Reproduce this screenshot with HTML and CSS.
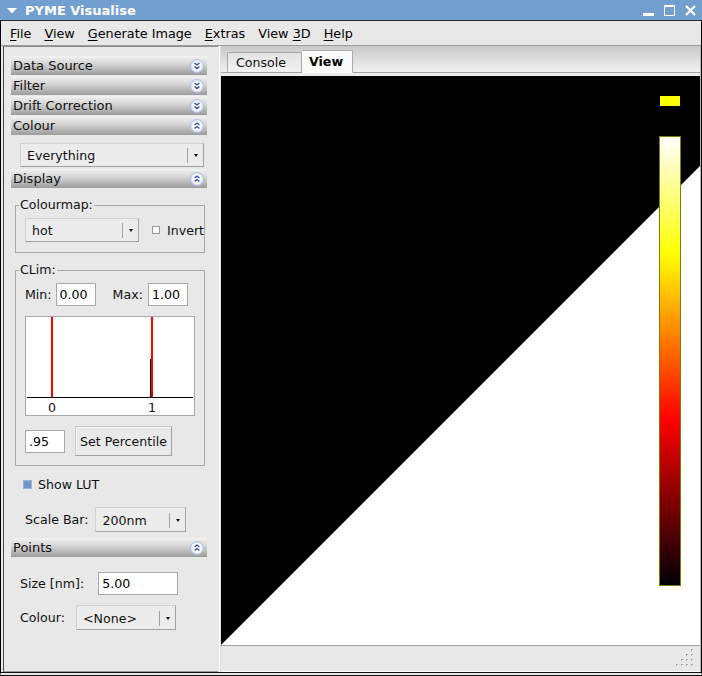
FILE: index.html
```html
<!DOCTYPE html>
<html>
<head>
<meta charset="utf-8">
<title>PYME Visualise</title>
<link rel="stylesheet" href="styles.css">
</head>
<body>
<div class="window">
  <div class="titlebar">
    <svg class="tb-menu" width="10" height="6" viewBox="0 0 10 6"><polygon points="0,0 10,0 5,5.5" fill="#fff"/></svg>
    <span class="title">PYME Visualise</span>
    <div class="tb-btns">
      <svg width="12" height="12" viewBox="0 0 12 12"><rect x="0" y="8" width="11" height="3" fill="#fff"/></svg>
      <svg width="12" height="12" viewBox="0 0 12 12"><path d="M0 0H11V11H0Z M1 2V10H10V2Z" fill="#fff" fill-rule="evenodd"/></svg>
      <svg width="12" height="12" viewBox="0 0 12 12"><path d="M1 1L10 10M10 1L1 10" stroke="#fff" stroke-width="2.2" fill="none"/></svg>
    </div>
  </div>
  <div class="frame">
    <div class="menubar">
      <span class="mi"><u>F</u>ile</span>
      <span class="mi"><u>V</u>iew</span>
      <span class="mi"><u>G</u>enerate Image</span>
      <span class="mi"><u>E</u>xtras</span>
      <span class="mi">View <u>3</u>D</span>
      <span class="mi"><u>H</u>elp</span>
    </div>
    <div class="main">
      <div class="sidebar">
        <div class="fold"><span>Data Source</span>
          <svg class="ficon" width="14" height="14" viewBox="0 0 14 14"><circle cx="7" cy="7" r="6.5" fill="#dde5f6" stroke="#b3c1df"/><circle cx="7" cy="7" r="4.8" fill="#fbfcff"/><path d="M4.6 4 L7 6 L9.4 4 M4.6 7.6 L7 9.6 L9.4 7.6" fill="none" stroke="#2b45b2" stroke-width="1.3"/></svg></div>
        <div class="fold"><span>Filter</span>
          <svg class="ficon" width="14" height="14" viewBox="0 0 14 14"><circle cx="7" cy="7" r="6.5" fill="#dde5f6" stroke="#b3c1df"/><circle cx="7" cy="7" r="4.8" fill="#fbfcff"/><path d="M4.6 4 L7 6 L9.4 4 M4.6 7.6 L7 9.6 L9.4 7.6" fill="none" stroke="#2b45b2" stroke-width="1.3"/></svg></div>
        <div class="fold"><span>Drift Correction</span>
          <svg class="ficon" width="14" height="14" viewBox="0 0 14 14"><circle cx="7" cy="7" r="6.5" fill="#dde5f6" stroke="#b3c1df"/><circle cx="7" cy="7" r="4.8" fill="#fbfcff"/><path d="M4.6 4 L7 6 L9.4 4 M4.6 7.6 L7 9.6 L9.4 7.6" fill="none" stroke="#2b45b2" stroke-width="1.3"/></svg></div>
        <div class="fold"><span>Colour</span>
          <svg class="ficon" width="14" height="14" viewBox="0 0 14 14"><circle cx="7" cy="7" r="6.5" fill="#dde5f6" stroke="#b3c1df"/><circle cx="7" cy="7" r="4.8" fill="#fbfcff"/><path d="M4.6 6 L7 4 L9.4 6 M4.6 9.6 L7 7.6 L9.4 9.6" fill="none" stroke="#2b45b2" stroke-width="1.3"/></svg></div>

        <div class="combo combo-everything"><span class="cval">Everything</span><span class="csep"></span><span class="carr"></span></div>

        <div class="fold fold-display"><span>Display</span>
          <svg class="ficon" width="14" height="14" viewBox="0 0 14 14"><circle cx="7" cy="7" r="6.5" fill="#dde5f6" stroke="#b3c1df"/><circle cx="7" cy="7" r="4.8" fill="#fbfcff"/><path d="M4.6 6 L7 4 L9.4 6 M4.6 9.6 L7 7.6 L9.4 9.6" fill="none" stroke="#2b45b2" stroke-width="1.3"/></svg></div>

        <fieldset class="sbox sbox-cmap">
          <legend>Colourmap:</legend>
          <div class="row">
            <div class="combo combo-hot"><span class="cval">hot</span><span class="csep"></span><span class="carr"></span></div>
            <span class="chk"></span>
            <span class="chk-label">Invert</span>
          </div>
        </fieldset>

        <fieldset class="sbox sbox-clim">
          <legend>CLim:</legend>
          <div class="row">
            <span class="lbl lbl-min">Min:</span>
            <span class="input in-small">0.00</span>
            <span class="lbl lbl-max">Max:</span>
            <span class="input in-small">1.00</span>
          </div>
          <div class="hist">
            <svg width="168" height="98" viewBox="0 0 168 98">
              <rect x="25" y="0" width="2" height="80" fill="#ff0000"/>
              <rect x="125" y="0" width="2" height="80" fill="#ff0000"/>
              <rect x="124" y="42" width="1" height="38" fill="#000"/>
              <rect x="1" y="80" width="166" height="1" fill="#000"/>
              <text x="26" y="95" text-anchor="middle" class="htxt">0</text>
              <text x="126" y="95" text-anchor="middle" class="htxt">1</text>
            </svg>
          </div>
          <div class="row row-pct">
            <span class="input in-small">.95</span>
            <span class="button">Set Percentile</span>
          </div>
        </fieldset>

        <div class="row row-lut">
          <span class="chk chk-on"></span>
          <span class="lut-label">Show LUT</span>
        </div>

        <div class="row row-scale">
          <span class="lbl">Scale Bar:</span>
          <div class="combo combo-scale"><span class="cval">200nm</span><span class="csep"></span><span class="carr"></span></div>
        </div>

        <div class="fold fold-points"><span>Points</span>
          <svg class="ficon" width="14" height="14" viewBox="0 0 14 14"><circle cx="7" cy="7" r="6.5" fill="#dde5f6" stroke="#b3c1df"/><circle cx="7" cy="7" r="4.8" fill="#fbfcff"/><path d="M4.6 6 L7 4 L9.4 6 M4.6 9.6 L7 7.6 L9.4 9.6" fill="none" stroke="#2b45b2" stroke-width="1.3"/></svg></div>

        <div class="row row-size">
          <span class="lbl lbl-size">Size [nm]:</span>
          <span class="input in-size">5.00</span>
        </div>
        <div class="row row-pcol">
          <span class="lbl lbl-pcol">Colour:</span>
          <div class="combo combo-none"><span class="cval">&lt;None&gt;</span><span class="csep"></span><span class="carr"></span></div>
        </div>
      </div>
      <div class="splitter"></div>
      <div class="notebook">
        <div class="tabs">
          <span class="tab">Console</span>
          <span class="tab tab-active">View</span>
        </div>
        <div class="page">
          <div class="canvas">
            <svg class="image" width="479" height="569" viewBox="0 0 479 569">
              <rect x="0" y="0" width="479" height="569" fill="#fff"/>
              <polygon points="0,0 479,0 479,90 0,569" fill="#000"/>
            </svg>
            <div class="lut-marker"></div>
            <div class="lut-bar"></div>
          </div>
        </div>
        <div class="status">
          <svg class="grip" width="20" height="20" viewBox="0 0 20 20">
            <g fill="#a9a9a9">
              <rect x="15" y="1" width="2" height="2"/>
              <rect x="10" y="6" width="2" height="2"/><rect x="15" y="6" width="2" height="2"/>
              <rect x="5" y="11" width="2" height="2"/><rect x="10" y="11" width="2" height="2"/><rect x="15" y="11" width="2" height="2"/>
              <rect x="0" y="16" width="2" height="2"/><rect x="5" y="16" width="2" height="2"/><rect x="10" y="16" width="2" height="2"/><rect x="15" y="16" width="2" height="2"/>
            </g>
            <g fill="#ffffff">
              <rect x="16" y="2" width="1" height="1"/>
              <rect x="11" y="7" width="1" height="1"/><rect x="16" y="7" width="1" height="1"/>
              <rect x="6" y="12" width="1" height="1"/><rect x="11" y="12" width="1" height="1"/><rect x="16" y="12" width="1" height="1"/>
              <rect x="1" y="17" width="1" height="1"/><rect x="6" y="17" width="1" height="1"/><rect x="11" y="17" width="1" height="1"/><rect x="16" y="17" width="1" height="1"/>
            </g>
          </svg>
        </div>
      </div>
    </div>
  </div>
</div>
</body>
</html>
```

FILE: styles.css
```css
* { box-sizing: border-box; }
html, body { margin: 0; padding: 0; }
body {
  width: 702px;
  height: 676px;
  overflow: hidden;
  background: #e8e8e8;
  font-family: "DejaVu Sans", "Noto Sans", sans-serif;
  font-size: 12.6px;
  color: #1a1a1a;
}
.window {
  width: 702px;
  height: 676px;
  display: flex;
  flex-direction: column;
}

/* title bar */
.titlebar {
  height: 21px;
  flex: none;
  background: #729fcf;
  border-bottom: 1px solid #2a2a2a;
  display: flex;
  align-items: center;
  padding-left: 7px;
  color: #fff;
}
.tb-menu { display: block; margin-top: 2px; }
.title {
  font-weight: bold;
  font-size: 13px;
  margin-left: 8px;
}
.tb-btns {
  margin-left: auto;
  display: flex;
  gap: 9px;
  padding-right: 5px;
  padding-top: 1px;
}
.tb-btns svg { display: block; }

/* frame */
.frame {
  flex: 1;
  min-height: 0;
  display: flex;
  flex-direction: column;
  border-left: 1px solid #000;
  border-right: 1px solid #000;
  border-bottom: 4px double #111;
}
.menubar {
  height: 25px;
  flex: none;
  display: flex;
  align-items: center;
  gap: 13px;
  padding-left: 9px;
  border-bottom: 1px solid #9c9c9c;
  background: #e8e8e8;
  color: #000;
  font-size: 12.8px;
}
.mi u { text-decoration: underline; text-underline-offset: 2px; }

.main {
  flex: 1;
  min-height: 0;
  display: flex;
  padding-left: 2px;
}

/* sidebar */
.sidebar {
  width: 215px;
  flex: none;
  display: flex;
  flex-direction: column;
  align-items: flex-start;
  border-left: 1px solid #4a4a4a;
  border-top: 1px solid #8c8c8c;
  border-bottom: 1px solid #9a9a9a;
  background: #e8e8e8;
  padding-top: 9px;
}
.fold {
  width: 196px;
  height: 19px;
  flex: none;
  margin: 0 0 1px 7px;
  padding: 0 3px 0 2px;
  display: flex;
  align-items: center;
  justify-content: space-between;
  font-size: 13px;
  color: #111;
  background: linear-gradient(#f3f3f3 0%, #d2d2d2 45%, #9c9c9c 100%);
}
.ficon { display: block; }
.fold-display { margin-top: 2px; }
.fold-points { margin-top: 6px; }

/* combo boxes */
.combo {
  height: 24px;
  flex: none;
  display: flex;
  align-items: center;
  padding-left: 6px;
  padding-top: 1px;
  background: #ececec;
  border: 1px solid;
  border-color: #d2d2d2 #a2a2a2 #a2a2a2 #d2d2d2;
  color: #111;
}
.cval { flex: 1; white-space: nowrap; }
.csep { width: 1px; height: 15px; background: #a0a0a0; flex: none; }
.carr {
  width: 15px;
  flex: none;
  display: flex;
  justify-content: center;
}
.carr::after {
  content: "";
  display: block;
  border-top: 3px solid #111;
  border-left: 2.5px solid transparent;
  border-right: 2.5px solid transparent;
}
.combo-everything { width: 184px; margin: 7px 0 0 16px; }
.combo-hot { width: 114px; }
.combo-scale { width: 91px; height: 25px; }
.combo-none { width: 100px; height: 25px; }

/* static boxes */
.sbox {
  width: 190px;
  margin: 9px 0 0 11px;
  padding: 6px 0 10px 9px;
  border: 1px solid #a8a8a8;
  min-inline-size: 0;
}
.sbox legend {
  padding: 0 1px;
  margin-left: -6px;
  font-size: 12.6px;
  line-height: 14px;
  color: #111;
}
.sbox-clim { margin-top: 10px; padding-bottom: 9px; }

.row { display: flex; align-items: center; }
.chk {
  width: 8px;
  height: 8px;
  flex: none;
  border: 1px solid #9a9a9a;
  background: #fbfbfb;
  margin-left: 13px;
}
.chk-label { margin-left: 7px; color: #111; white-space: nowrap; }

.lbl { color: #111; white-space: nowrap; flex: none; }
.lbl-min { margin-right: 4px; }
.lbl-max { margin-left: 17px; margin-right: 5px; }

.input {
  height: 23px;
  flex: none;
  display: flex;
  align-items: center;
  padding-left: 3px;
  background: #fff;
  border: 1px solid #a8a8a8;
  color: #000;
}
.in-small { width: 40px; }
.in-size { width: 80px; margin-left: 14px; }

.hist {
  width: 170px;
  height: 100px;
  margin-top: 10px;
  border: 1px solid #a8a8a8;
  background: #fff;
}
.hist svg { display: block; }
.htxt { font-family: "DejaVu Sans", sans-serif; font-size: 12.6px; fill: #111; }

.row-pct { margin-top: 10px; height: 30px; gap: 10px; }
.button {
  width: 97px;
  height: 30px;
  flex: none;
  display: flex;
  align-items: center;
  justify-content: center;
  background: #e9e9e9;
  border: 1px solid;
  border-color: #c8c8c8 #a0a0a0 #a0a0a0 #c8c8c8;
  box-shadow: inset 1px 1px 0 #f8f8f8;
  color: #111;
  white-space: nowrap;
}

.row-lut { margin: 10px 0 0 19px; height: 16px; }
.chk-on {
  margin-left: 0;
  width: 9px;
  height: 9px;
  border: 1px solid #9fb2d2;
  background: #7494c6;
}
.lut-label { margin-left: 6px; color: #111; }

.row-scale { margin: 15px 0 0 21px; }
.row-scale .lbl { margin-right: 7px; }

.row-size { margin: 14px 0 0 16px; }
.row-size .lbl { margin-top: -1px; }
.row-pcol { margin: 10px 0 0 16px; }
.lbl-pcol { width: 56px; margin-top: -1px; }

/* splitter */
.splitter {
  width: 3px;
  flex: none;
  background: linear-gradient(90deg, #e8e8e8 0 1px, #ffffff 1px 2px, #dedede 2px);
}

/* notebook */
.notebook {
  flex: 1;
  min-width: 0;
  display: flex;
  flex-direction: column;
  border-right: 1px solid #b8b8b8;
}
.tabs {
  height: 27px;
  flex: none;
  display: flex;
  align-items: flex-end;
  padding-left: 6px;
  background: linear-gradient(#c9c9c9, #f1f1f1);
  border-bottom: 1px solid #a4a4a4;
}
.tab {
  height: 21px;
  margin-bottom: -1px;
  padding: 0 7px 0 8px;
  display: flex;
  align-items: center;
  border: 1px solid #a8a8a8;
  border-bottom: 1px solid #a4a4a4;
  border-radius: 2px 2px 0 0;
  background: linear-gradient(#e2e2e2, #f3f3f3);
  color: #111;
  width: 75px;
}
.tab-active {
  height: 23px;
  width: 51px;
  font-weight: bold;
  background: #fafafa;
  border-bottom-color: #fafafa;
  border-left: none;
  padding-left: 7px;
  color: #000;
}
.page {
  flex: 1;
  min-height: 0;
  padding-top: 3px;
  display: flex;
  flex-direction: column;
  background: #ececec;
}
.canvas {
  flex: 1;
  position: relative;
  overflow: hidden;
  background: #fff;
  border-bottom: 1px solid #a2a2a2;
}
.image { display: block; }
.lut-marker {
  position: absolute;
  left: 439px;
  top: 20px;
  width: 20px;
  height: 10px;
  background: #ffff00;
}
.lut-bar {
  position: absolute;
  left: 438px;
  top: 60px;
  width: 22px;
  height: 450px;
  border: 1px solid #7c7c00;
  background: linear-gradient(to top, #000000 0%, #ff0000 37%, #ffff00 74%, #ffffff 100%);
}
.status {
  height: 26px;
  flex: none;
  display: flex;
  justify-content: flex-end;
  align-items: flex-start;
  padding: 2px 4px 0 0;
  background: #e8e8e8;
  border-bottom: 1px solid #fdfdfd;
}
.grip { display: block; }
```
